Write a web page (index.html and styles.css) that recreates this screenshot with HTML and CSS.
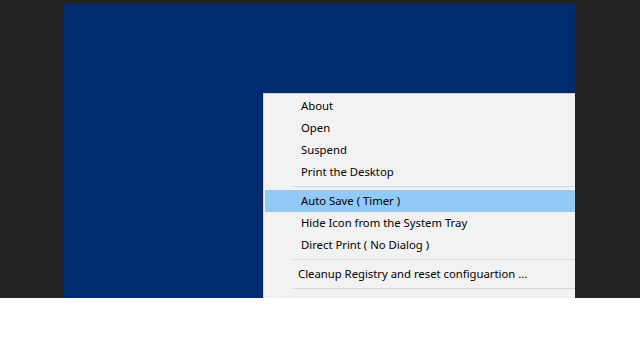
FILE: index.html
```html
<!DOCTYPE html>
<html lang="en">

<head>
    <meta charset="UTF-8">
    <meta name="viewport" content="width=device-width, initial-scale=1.0">
    <title>Tray menu</title>
    <link rel="stylesheet" href="styles.css">
</head>

<body>
    <div class="screen">
        <div class="desktop">
            <div class="menu">
                <div class="item">About</div>
                <div class="item">Open</div>
                <div class="item">Suspend</div>
                <div class="item">Print the Desktop</div>
                <div class="sep"></div>
                <div class="item active">Auto Save ( Timer )</div>
                <div class="item">Hide Icon from the System Tray</div>
                <div class="item">Direct Print ( No Dialog )</div>
                <div class="sep"></div>
                <div class="item wide">Cleanup Registry and reset configuartion ...</div>
                <div class="sep"></div>
                <div class="item">Exit</div>
            </div>
        </div>
    </div>
</body>

</html>
```

FILE: styles.css
```css
* {
    box-sizing: border-box;
}

body {
    margin: 0;
    background-color: #ffffff;
    font-family: "Noto Sans", "Open Sans", sans-serif;
}

.screen {
    width: 640px;
    height: 298px;
    overflow: hidden;
    background-color: #232323;
    padding: 4px 0 0 64px;
}

.desktop {
    width: 511px;
    height: 294px;
    background-color: #022a6f;
    padding: 89px 0 0 199px;
    overflow: hidden;
}

.menu {
    width: 312px;
    background-color: #f2f2f2;
    border-left: 1px solid #cfcfcf;
    border-top: 1px solid #cfcfcf;
    padding: 1px 0 0 1px;
}

.item {
    height: 22px;
    line-height: 22px;
    padding-left: 36px;
    font-size: 11.3px;
    color: #000000;
    white-space: nowrap;
}

.item.wide {
    padding-left: 33px;
}

.item.active {
    background-color: #91c9f7;
}

.sep {
    height: 7px;
    margin-left: 28px;
    padding-top: 3px;
}

.sep::after {
    content: "";
    display: block;
    height: 1px;
    background-color: #d7d7d7;
}
```
